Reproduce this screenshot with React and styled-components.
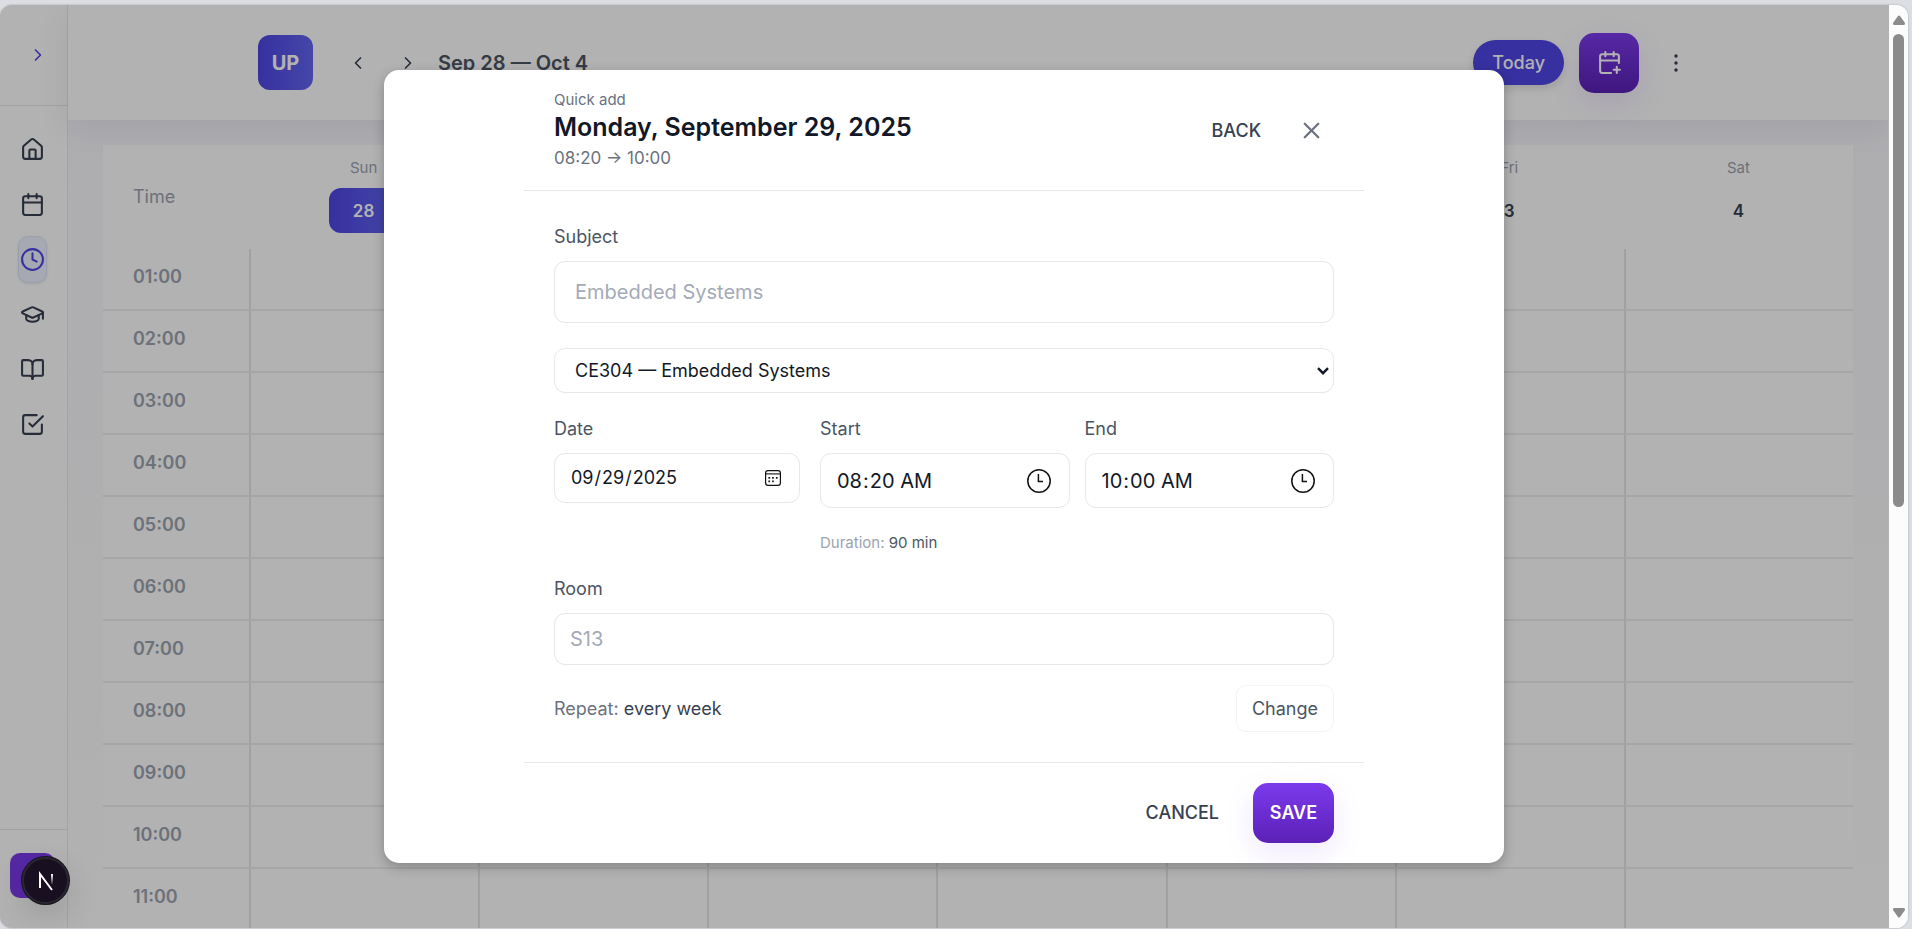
import React from "react";
import styled, { createGlobalStyle, css } from "styled-components";
import { BookOpen, CalendarPlus, ChevronLeft, ChevronRight, GraduationCap, House, X } from "lucide-react";

const GlobalStyle = createGlobalStyle`
  *, *::before, *::after { box-sizing: border-box; }
  body {
    margin: 0;
    background: #dddee3;
    color: #111827;
    font-family: Inter, "Liberation Sans", sans-serif;
    font-size: 18px;
    line-height: 24px;
  }
  button, input, select { font: inherit; color: inherit; margin: 0; }
  button { border: 0; background: none; padding: 0; cursor: pointer; }
`;

const Page = styled.div`
  height: 100vh;
  padding: 5px 4px 1px 0;
`;

const Frame = styled.div`
  display: flex;
  height: 100%;
  overflow: hidden;
  border-radius: 12px;
  background: #fff;
  box-shadow: 0 0 2px rgba(0, 0, 0, 0.3);
`;

const Viewport = styled.div`
  position: relative;
  display: flex;
  flex: 1;
  min-width: 0;
  overflow: hidden;
`;

const Sidebar = styled.aside`
  display: flex;
  flex-direction: column;
  width: 68px;
  flex-shrink: 0;
  border-right: 1px solid #e9eaec;
`;

const SidebarTop = styled.div`
  display: flex;
  align-items: center;
  justify-content: flex-end;
  height: 101px;
  padding-right: 19px;
  border-bottom: 1px solid #e5e7eb;
  color: #4f46e5;
`;

const SidebarNav = styled.nav`
  display: flex;
  flex-direction: column;
  align-items: center;
  gap: 8px;
  flex: 1;
  padding: 20px 3px 0 0;
`;

const NavLink = styled.a`
  display: grid;
  place-items: center;
  width: 29px;
  height: 47px;
  border: 1px solid transparent;
  border-radius: 10px;
  color: #374151;
  ${(p) =>
    p.$active &&
    css`
      color: #4f46e5;
      background: #eef2ff;
      border-color: #dde3fd;
      box-shadow: 0 1px 3px rgba(0, 0, 0, 0.1);
    `}
`;

const SidebarFoot = styled.div`
  height: 99px;
  padding: 23px 10px;
  border-top: 1px solid #e5e7eb;
`;

const Avatar = styled.button`
  display: block;
  width: 45px;
  height: 45px;
  border-radius: 10px;
  background: #7c3aed;
`;

const Main = styled.main`
  display: flex;
  flex-direction: column;
  flex: 1;
  min-width: 0;
  background: linear-gradient(#f7f7fc, #ffffff 100%);
`;

const Header = styled.header`
  flex-shrink: 0;
  background: #fff;
  box-shadow: 0 8px 30px rgba(30, 27, 75, 0.08);
`;

const HeaderInner = styled.div`
  display: flex;
  align-items: center;
  justify-content: space-between;
  height: 115px;
  max-width: 1440px;
  margin: 0 auto;
`;

const HeaderGroup = styled.div`
  display: flex;
  align-items: center;
  gap: ${(p) => p.$gap}px;
`;

const Logo = styled.div`
  display: grid;
  place-items: center;
  width: 55px;
  height: 55px;
  margin-right: 15px;
  border-radius: 12px;
  background: linear-gradient(90deg, #4f46e5, #6366f1);
  color: #fff;
  font-size: 20px;
  font-weight: 700;
`;

const IconButton = styled.button`
  display: grid;
  place-items: center;
  width: ${(p) => p.$size}px;
  height: ${(p) => p.$size}px;
  color: ${(p) => p.$color || "#374151"};
`;

const WeekTitle = styled.h1`
  margin: 0;
  color: #4b5563;
  font-size: 20px;
  font-weight: 600;
`;

const TodayButton = styled.button`
  height: 45px;
  padding: 0 19px;
  border-radius: 23px;
  background: #4f46e5;
  color: #fff;
  font-weight: 500;
  box-shadow: 0 4px 8px rgba(0, 0, 0, 0.12);
`;

const PurpleButton = styled.button`
  display: grid;
  place-items: center;
  width: ${(p) => p.$width}px;
  height: 60px;
  border-radius: 15px;
  background: linear-gradient(#7c3aed, #5b21b6);
  color: #fff;
  font-weight: 600;
  box-shadow: 0 10px 30px rgba(124, 58, 237, 0.12);
`;

const Calendar = styled.table`
  width: calc(100% - 70px);
  margin: 25px 35px 0;
  border-collapse: separate;
  border-spacing: 0;
  table-layout: fixed;
  background: #fff;
`;

const TimeHead = styled.th`
  width: 146px;
  height: 104px;
  padding: 0 0 0 30px;
  color: #9ca3af;
  font-weight: 400;
  text-align: left;
`;

const DayHead = styled.th`
  padding: 11px 0 15px;
  vertical-align: top;
  color: #9ca3af;
  font-size: 15px;
  font-weight: 400;
`;

const DayNumber = styled.span`
  display: grid;
  place-items: center;
  width: 70px;
  height: 45px;
  margin: 8px auto 0;
  border-radius: 12px;
  color: ${(p) => (p.$today ? "#fff" : "#374151")};
  background: ${(p) => (p.$today ? "linear-gradient(90deg, #4f46e5, #6366f1)" : "none")};
  font-size: 17px;
  font-weight: 600;
`;

const HourHead = styled.th`
  height: 62px;
  padding: 0 0 5px 30px;
  border-bottom: 2px solid #eeeeef;
  color: #9ca3af;
  font-weight: 600;
  text-align: left;
`;

const Slot = styled.td`
  padding: 0;
  border-bottom: 2px solid #eeeeef;
  border-left: 2px solid #e5e7eb;
`;

const Scrollbar = styled.div`
  display: flex;
  flex-direction: column;
  align-items: center;
  width: 20px;
  padding: 10px 0;
  border-left: 1px solid #b2b2b2;
  background: #fcfcfc;
`;

const ScrollThumb = styled.div`
  width: 11px;
  height: 473px;
  margin: 9px 0 auto;
  border-radius: 6px;
  background: #8b8b8b;
`;

const Overlay = styled.div`
  position: absolute;
  inset: 0;
  display: flex;
  align-items: center;
  justify-content: center;
  background: rgba(0, 0, 0, 0.3);
`;

const Dialog = styled.section`
  width: 100%;
  max-width: 1120px;
  border-radius: 15px;
  background: #fff;
  box-shadow: 0 4px 12px rgba(0, 0, 0, 0.25);
`;

const DialogInner = styled.form`
  max-width: 840px;
  margin: 0 auto;
`;

const DialogHead = styled.header`
  display: flex;
  justify-content: space-between;
  height: 121px;
  padding: 18px 30px 0;
  border-bottom: 1px solid #e5e7eb;
`;

const Eyebrow = styled.p`
  margin: 0;
  color: #6b7280;
  font-size: 15px;
`;

const DialogTitle = styled.h2`
  margin: 0;
  font-size: 25px;
  font-weight: 600;
  line-height: 30px;
`;

const TimeRange = styled.p`
  margin: 4px 0 0;
  color: #6b7280;
  font-size: 17px;
`;

const HeadActions = styled.div`
  display: flex;
  align-items: center;
  gap: 28px;
  height: 45px;
  margin-top: 20px;
`;

const TextButton = styled.button`
  color: #374151;
  font-weight: 500;
`;

const Body = styled.div`
  padding: 34px 30px 0;
`;

const Label = styled.label`
  display: block;
  margin-bottom: 12px;
  color: #4b5563;
`;

const fieldBox = css`
  display: block;
  width: 100%;
  border: 1px solid #e5e7eb;
  border-radius: 11px;
  background: #fff;
  color: #111827;
  &::placeholder { color: #a3aab8; opacity: 1; }
`;

const TextInput = styled.input`
  ${fieldBox}
  height: ${(p) => p.$height}px;
  padding: 0 ${(p) => p.$inset}px;
  font-size: 20px;
`;

const FieldWrap = styled.div`
  position: relative;
  margin-top: ${(p) => p.$top || 0}px;
`;

const FieldIcon = styled.span`
  position: absolute;
  top: 0;
  bottom: 0;
  right: ${(p) => p.$right}px;
  display: flex;
  align-items: center;
  pointer-events: none;
`;

const Select = styled.select`
  ${fieldBox}
  appearance: none;
  height: 45px;
  padding: 0 30px 0 20px;
`;

const WhenRow = styled.div`
  display: grid;
  grid-template-columns: 246fr 514fr;
  gap: 20px;
  margin-top: 24px;
`;

const TimePair = styled.div`
  display: grid;
  grid-template-columns: 1fr 1fr;
  gap: 15px;
`;

const PickerInput = styled.input`
  ${fieldBox}
  height: ${(p) => p.$height}px;
  padding: 0 15px;
  font-size: ${(p) => p.$font}px;
  &::-webkit-calendar-picker-indicator { opacity: 0; }
`;

const Duration = styled.p`
  margin: 23px 0 22px;
  color: #9ca3af;
  font-size: 15px;
  span { color: #4b5563; }
`;

const RepeatRow = styled.div`
  display: flex;
  align-items: center;
  justify-content: space-between;
  margin: 20px 0 30px;
  color: #6b7280;
  span { color: #374151; }
`;

const ChangeButton = styled.button`
  height: 47px;
  padding: 0 15px;
  border: 1px solid #f3f4f6;
  border-radius: 10px;
  color: #4b5563;
`;

const DialogFoot = styled.footer`
  display: flex;
  align-items: center;
  justify-content: flex-end;
  gap: 34px;
  padding: 20px 30px;
  border-top: 1px solid #e5e7eb;
`;

const DevBadge = styled.button`
  position: absolute;
  left: 22px;
  bottom: 24px;
  display: grid;
  place-items: center;
  width: 47px;
  height: 47px;
  border: 2px solid #2b2730;
  border-radius: 50%;
  background: #180f20;
  box-shadow: 0 0 0 1px #17131a, 0 12px 32px rgba(0, 0, 0, 0.14);
`;

const Stroke = ({ size = 25, width = 2, children }) => (
  <svg width={size} height={size} viewBox="0 0 24 24" fill="none" stroke="currentColor" strokeWidth={width} strokeLinecap="round" strokeLinejoin="round" aria-hidden="true">
    {children}
  </svg>
);

const CalendarIcon = () => (
  <Stroke>
    <rect x="3" y="4" width="18" height="18" rx="2" />
    <path d="M16 2v4M8 2v4M3 10h18" />
  </Stroke>
);
const ClockIcon = () => (
  <Stroke>
    <circle cx="12" cy="12" r="10" />
    <path d="M12 6v6l4 2" />
  </Stroke>
);
const TaskIcon = () => (
  <Stroke>
    <path d="M9 11l3 3L22 4" />
    <path d="M21 12v7a2 2 0 0 1-2 2H5a2 2 0 0 1-2-2V5a2 2 0 0 1 2-2h11" />
  </Stroke>
);
const DotsIcon = () => (
  <svg width="20" height="20" viewBox="0 0 20 20" fill="currentColor" aria-hidden="true">
    <circle cx="10" cy="3" r="1.7" />
    <circle cx="10" cy="10" r="1.7" />
    <circle cx="10" cy="17" r="1.7" />
  </svg>
);
const DropMark = () => (
  <svg width="12" height="8" viewBox="0 0 12 8" fill="none" stroke="#111827" strokeWidth="2.4" aria-hidden="true">
    <path d="M1 1.2l5 5 5-5" />
  </svg>
);
const DateMark = () => (
  <svg width="16" height="16" viewBox="0 0 16 16" fill="none" stroke="#111" aria-hidden="true">
    <rect x="0.6" y="0.6" width="14.8" height="14.8" rx="2.4" strokeWidth="1.2" />
    <path d="M1 3.9h14" strokeWidth="1.1" />
    <g fill="#111" stroke="none">
      <rect x="3.4" y="7" width="1.7" height="1.7" />
      <rect x="7.1" y="7" width="1.7" height="1.7" />
      <rect x="10.9" y="7" width="1.7" height="1.7" />
      <rect x="3.4" y="10.5" width="1.7" height="1.7" />
      <rect x="7.1" y="10.5" width="1.7" height="1.7" />
    </g>
  </svg>
);
const TimeMark = () => (
  <svg width="24" height="24" viewBox="0 0 24 24" fill="none" stroke="#111" strokeWidth="1.5" aria-hidden="true">
    <circle cx="12" cy="12" r="11.2" />
    <path d="M11.4 5v7.4H16" />
  </svg>
);
const NextMark = () => (
  <svg width="18" height="20" viewBox="0 0 18 20" fill="none" stroke="#fff" strokeWidth="2" aria-hidden="true">
    <defs>
      <linearGradient id="fade" x1="0" y1="0" x2="0" y2="1">
        <stop offset="0" stopColor="#fff" />
        <stop offset="1" stopColor="#fff" stopOpacity="0.1" />
      </linearGradient>
    </defs>
    <path d="M3 17V3l12 16" />
    <rect x="14" y="3" width="2" height="10" fill="url(#fade)" stroke="none" />
  </svg>
);

const NAV = [
  ["Home", <House size={25} />],
  ["Calendar", <CalendarIcon />],
  ["Timetable", <ClockIcon />],
  ["Courses", <GraduationCap size={25} />],
  ["Library", <BookOpen size={25} />],
  ["Tasks", <TaskIcon />],
];

const DAYS = [["Sun", 28], ["Mon", 29], ["Tue", 30], ["Wed", 1], ["Thu", 2], ["Fri", 3], ["Sat", 4]];
const HOURS = Array.from({ length: 11 }, (_, i) => `${String(i + 1).padStart(2, "0")}:00`);

function PickerField({ id, label, type, value, height, font, icon }) {
  return (
    <div>
      <Label htmlFor={id}>{label}</Label>
      <FieldWrap>
        <PickerInput id={id} type={type} defaultValue={value} $height={height} $font={font} />
        <FieldIcon $right={19}>{icon}</FieldIcon>
      </FieldWrap>
    </div>
  );
}

function QuickAdd() {
  return (
    <Dialog role="dialog" aria-labelledby="quick-add-title">
      <DialogInner onSubmit={(e) => e.preventDefault()}>
        <DialogHead>
          <div>
            <Eyebrow>Quick add</Eyebrow>
            <DialogTitle id="quick-add-title">Monday, September 29, 2025</DialogTitle>
            <TimeRange>08:20 → 10:00</TimeRange>
          </div>
          <HeadActions>
            <TextButton type="button">BACK</TextButton>
            <IconButton type="button" $size={45} $color="#6b7280" aria-label="Close">
              <X size={27} strokeWidth={2} />
            </IconButton>
          </HeadActions>
        </DialogHead>
        <Body>
          <Label htmlFor="subject">Subject</Label>
          <TextInput id="subject" $height={62} $inset={20} placeholder="Embedded Systems" />
          <FieldWrap $top={25}>
            <Select aria-label="Course" defaultValue="CE304">
              <option value="CE304">CE304 — Embedded Systems</option>
            </Select>
            <FieldIcon $right={5}><DropMark /></FieldIcon>
          </FieldWrap>
          <WhenRow>
            <PickerField id="date" label="Date" type="date" value="2025-09-29" height={50} font={18} icon={<DateMark />} />
            <div>
              <TimePair>
                <PickerField id="start" label="Start" type="time" value="08:20" height={55} font={20} icon={<TimeMark />} />
                <PickerField id="end" label="End" type="time" value="10:00" height={55} font={20} icon={<TimeMark />} />
              </TimePair>
              <Duration>Duration: <span>90 min</span></Duration>
            </div>
          </WhenRow>
          <Label htmlFor="room">Room</Label>
          <TextInput id="room" $height={52} $inset={15} placeholder="S13" />
          <RepeatRow>
            <div>Repeat: <span>every week</span></div>
            <ChangeButton type="button">Change</ChangeButton>
          </RepeatRow>
        </Body>
        <DialogFoot>
          <TextButton type="button">CANCEL</TextButton>
          <PurpleButton type="submit" $width={81}>SAVE</PurpleButton>
        </DialogFoot>
      </DialogInner>
    </Dialog>
  );
}

export default function App() {
  return (
    <Page>
      <GlobalStyle />
      <Frame>
        <Viewport>
          <Sidebar>
            <SidebarTop>
              <IconButton $size={20} $color="#4f46e5" aria-label="Expand sidebar">
                <ChevronRight size={20} />
              </IconButton>
            </SidebarTop>
            <SidebarNav>
              {NAV.map(([name, icon]) => (
                <NavLink key={name} href="#" aria-label={name} $active={name === "Timetable"}>{icon}</NavLink>
              ))}
            </SidebarNav>
            <SidebarFoot><Avatar aria-label="Account" /></SidebarFoot>
          </Sidebar>
          <Main>
            <Header>
              <HeaderInner>
                <HeaderGroup $gap={10}>
                  <Logo>UP</Logo>
                  <IconButton $size={40} aria-label="Previous week"><ChevronLeft size={20} /></IconButton>
                  <IconButton $size={40} aria-label="Next week"><ChevronRight size={20} /></IconButton>
                  <WeekTitle>Sep 28 — Oct 4</WeekTitle>
                </HeaderGroup>
                <HeaderGroup $gap={15}>
                  <TodayButton>Today</TodayButton>
                  <PurpleButton $width={60} aria-label="Add event"><CalendarPlus size={25} /></PurpleButton>
                  <IconButton $size={44} aria-label="More"><DotsIcon /></IconButton>
                </HeaderGroup>
              </HeaderInner>
            </Header>
            <Calendar>
              <thead>
                <tr>
                  <TimeHead>Time</TimeHead>
                  {DAYS.map(([day, n]) => (
                    <DayHead key={day}>{day}<DayNumber $today={n === 28}>{n}</DayNumber></DayHead>
                  ))}
                </tr>
              </thead>
              <tbody>
                {HOURS.map((h) => (
                  <tr key={h}>
                    <HourHead scope="row">{h}</HourHead>
                    {DAYS.map(([day]) => <Slot key={day} />)}
                  </tr>
                ))}
              </tbody>
            </Calendar>
          </Main>
          <Overlay><QuickAdd /></Overlay>
          <DevBadge aria-label="Developer tools"><NextMark /></DevBadge>
        </Viewport>
        <Scrollbar>
          <svg width="12" height="10" viewBox="0 0 12 10" fill="#8b8b8b" aria-hidden="true"><path d="M5 1Q6 0 7 1L12 8Q12 10 11 10H1Q0 10 0 8Z" /></svg>
          <ScrollThumb />
          <svg width="12" height="10" viewBox="0 0 12 10" fill="#8b8b8b" aria-hidden="true"><path d="M5 9Q6 10 7 9L12 2Q12 0 11 0H1Q0 0 0 2Z" /></svg>
        </Scrollbar>
      </Frame>
    </Page>
  );
}
